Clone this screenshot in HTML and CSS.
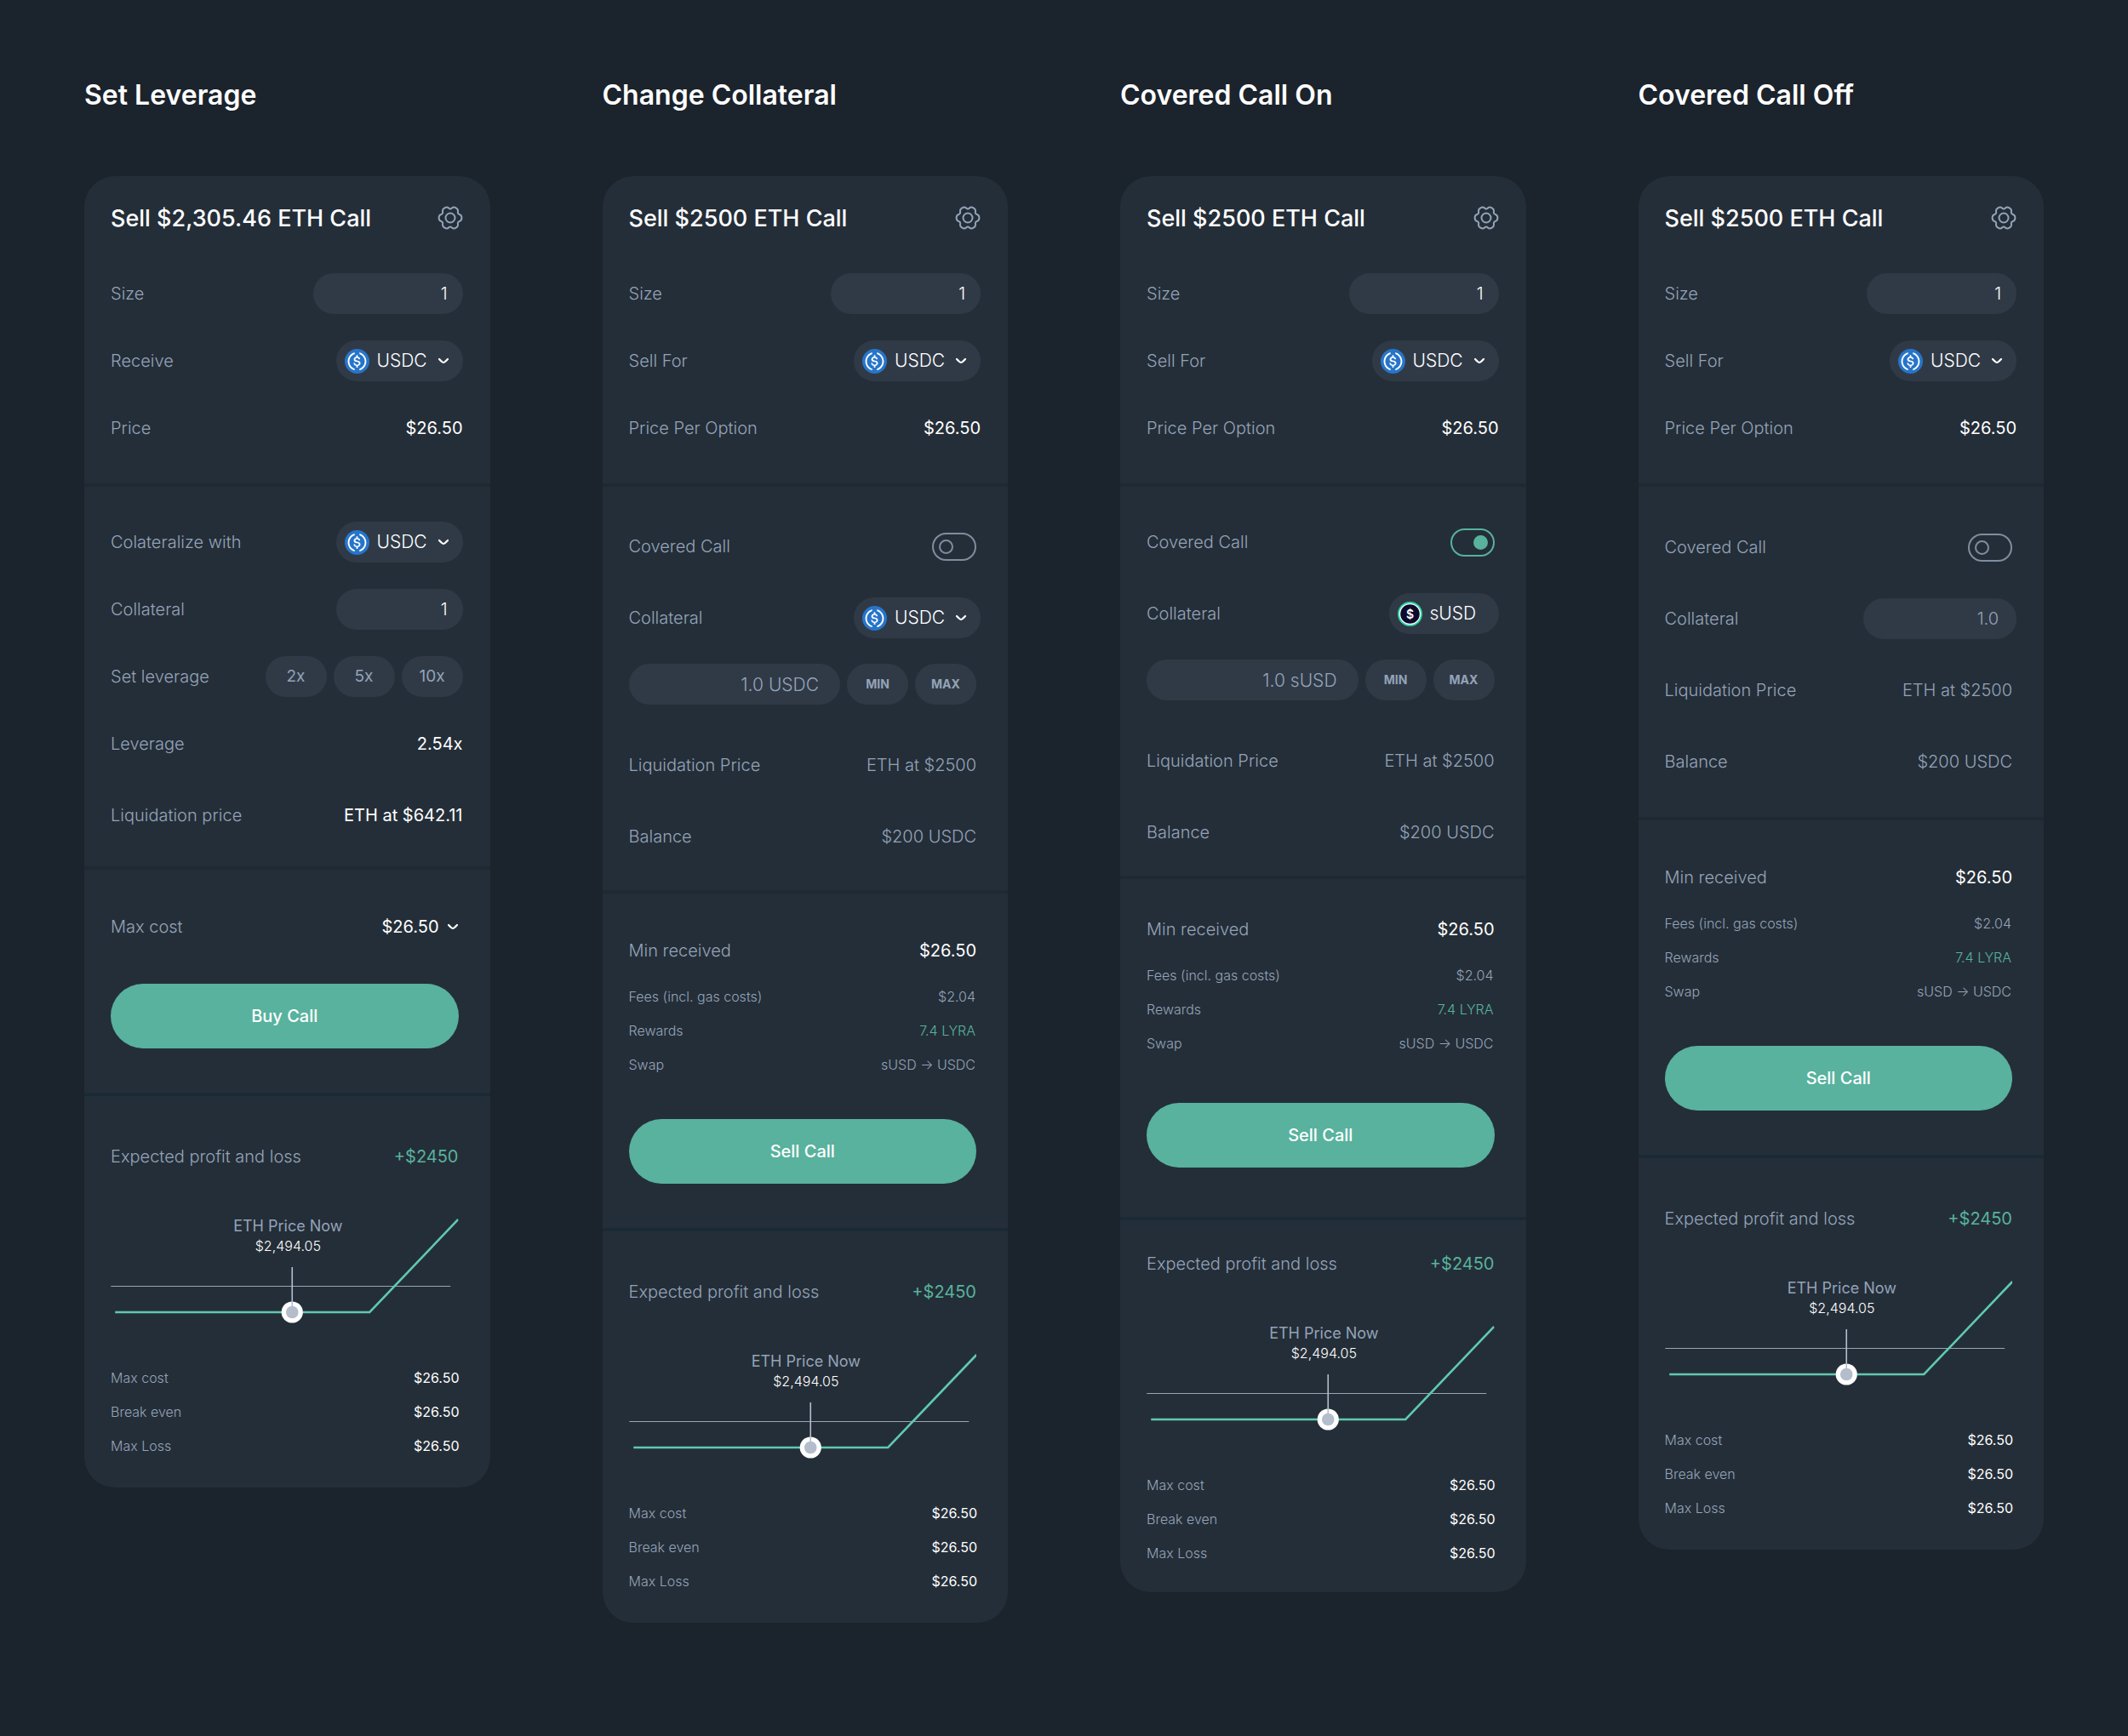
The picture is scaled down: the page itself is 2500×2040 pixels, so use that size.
FILE: index.html
```html
<!DOCTYPE html>
<html lang="en">
<head>
<meta charset="utf-8">
<meta name="viewport" content="width=device-width, initial-scale=1">
<title>Option trade panels</title>
<link rel="stylesheet" href="styles.css">
</head>
<body>
<svg class="sprite" aria-hidden="true">
  <symbol id="gear" viewBox="-15 -15 30 30">
    <path fill="none" stroke="currentColor" stroke-width="2" stroke-linejoin="round" d="M13.39 0Q13.39 3.34 10.85 4.07Q8.31 4.8 8.95 7.37Q9.59 9.93 6.7 11.6Q3.8 13.27 1.9 11.44Q0 9.6 -1.9 11.44Q-3.8 13.27 -6.7 11.6Q-9.59 9.93 -8.95 7.37Q-8.31 4.8 -10.85 4.07Q-13.39 3.34 -13.39 0Q-13.39 -3.34 -10.85 -4.07Q-8.31 -4.8 -8.95 -7.37Q-9.59 -9.93 -6.7 -11.6Q-3.8 -13.27 -1.9 -11.44Q0 -9.6 1.9 -11.44Q3.8 -13.27 6.7 -11.6Q9.59 -9.93 8.95 -7.37Q8.31 -4.8 10.85 -4.07Q13.39 -3.34 13.39 0Z"/>
    <circle r="5.5" fill="none" stroke="currentColor" stroke-width="2"/>
  </symbol>
  <symbol id="usdc" viewBox="0 0 2000 2000">
    <circle cx="1000" cy="1000" r="1000" fill="#2775ca"/>
    <path fill="#fff" d="M1275 1158.33c0-145.83-87.5-195.83-262.5-216.66-125-16.67-150-50-150-108.34s41.67-95.83 125-95.83c75 0 116.67 25 137.5 87.5 4.17 12.5 16.67 20.83 29.17 20.83h66.66c16.67 0 29.17-12.5 29.17-29.16v-4.17c-16.67-91.67-91.67-162.5-187.5-170.83v-100c0-16.67-12.5-29.17-33.33-33.34h-62.5c-16.67 0-29.17 12.5-33.34 33.34v95.83c-125 16.67-204.16 100-204.16 204.17 0 137.5 83.33 191.66 258.33 212.5 116.67 20.83 154.17 45.83 154.17 112.5s-58.34 112.5-137.5 112.5c-108.34 0-145.84-45.84-158.34-108.34-4.16-16.66-16.66-25-29.16-25h-70.84c-16.66 0-29.16 12.5-29.16 29.17v4.17c16.66 104.16 83.33 179.16 220.83 200v100c0 16.66 12.5 29.16 33.33 33.33h62.5c16.67 0 29.17-12.5 33.34-33.33v-100c125-20.84 208.33-108.34 208.33-220.84z"/>
    <path fill="#fff" d="M787.5 1595.83c-325-116.66-491.67-479.16-370.83-800 62.5-175 200-308.33 370.83-370.83 16.67-8.33 25-20.83 25-41.67V325c0-16.67-8.33-29.17-25-33.33-4.17 0-12.5 0-16.67 4.16-395.83 125-612.5 545.84-487.5 941.67 75 233.33 254.17 412.5 487.5 487.5 16.67 8.33 33.34 0 37.5-16.67 4.17-4.16 4.17-8.33 4.17-16.66v-58.34c0-12.5-12.5-29.16-25-37.5zM1229.17 295.83c-16.67-8.33-33.34 0-37.5 16.67-4.17 4.17-4.17 8.33-4.17 16.67v58.33c0 16.67 12.5 33.33 25 41.67 325 116.66 491.67 479.16 370.83 800-62.5 175-200 308.33-370.83 370.83-16.67 8.33-25 20.83-25 41.67V1700c0 16.67 8.33 29.17 25 33.33 4.17 0 12.5 0 16.67-4.16 395.83-125 612.5-545.84 487.5-941.67-75-237.5-258.34-416.67-487.5-491.67z"/>
  </symbol>
  <symbol id="chevron" viewBox="0 0 14 8">
    <path fill="none" stroke="currentColor" stroke-width="2.2" stroke-linecap="round" stroke-linejoin="round" d="M2 2Q5.8 6 7 6T12 2"/>
  </symbol>
  <symbol id="payoff" viewBox="0 0 408 126">
    <path d="M0 80.5H399" stroke="#9aa5b4" stroke-width="1"/>
    <path d="M5 111H304L408 2" fill="none" stroke="#5fc9af" stroke-width="2.6"/>
    <circle cx="213" cy="111" r="12.6" fill="#fff"/>
    <circle cx="213" cy="111" r="7.3" fill="#b4bdcc"/>
    <path d="M213 58V104" stroke="#b4bdcc" stroke-width="1.6"/>
  </symbol>
</svg>

<main class="board">

  <section class="panel">
    <h2 class="panel-name">Set Leverage</h2>
    <article class="card">
      <div class="part part-order">
        <header class="card-head">
          <h3 class="card-title">Sell $2,305.46 ETH Call</h3>
          <button class="icon-button" type="button" aria-label="Settings"><svg class="gear"><use href="#gear"/></svg></button>
        </header>
        <div class="row"><label for="size-1">Size</label><input class="field" id="size-1" type="text" value="1"></div>
        <div class="row"><label for="pay-1">Receive</label>
          <div class="token"><svg class="coin"><use href="#usdc"/></svg><select class="token-select" id="pay-1"><option>USDC</option></select><svg class="chevron"><use href="#chevron"/></svg></div></div>
        <div class="row"><span>Price</span><span class="value">$26.50</span></div>
      </div>
      <div class="part part-leverage">
        <div class="row"><label for="with-1">Colateralize with</label>
          <div class="token"><svg class="coin"><use href="#usdc"/></svg><select class="token-select" id="with-1"><option>USDC</option></select><svg class="chevron"><use href="#chevron"/></svg></div></div>
        <div class="row"><label for="col-1">Collateral</label><input class="field field-short" id="col-1" type="text" value="1"></div>
        <div class="row"><span>Set leverage</span>
          <div class="chips"><button class="chip" type="button">2x</button><button class="chip" type="button">5x</button><button class="chip" type="button">10x</button></div></div>
        <div class="row"><span>Leverage</span><span class="value">2.54x</span></div>
        <div class="row loose"><span>Liquidation price</span><span class="value">ETH at $642.11</span></div>
      </div>
      <div class="part part-total">
        <div class="row inset"><span>Max cost</span><button class="cost value" type="button">$26.50<svg class="chevron"><use href="#chevron"/></svg></button></div>
        <button class="submit submit-near" type="button">Buy Call</button>
      </div>
      <div class="part part-profit">
        <div class="row inset"><span>Expected profit and loss</span><span class="gain">+$2450</span></div>
        <div class="chart"><svg class="payoff"><use href="#payoff"/></svg><p class="marker"><span class="marker-name">ETH Price Now</span><span class="marker-price">$2,494.05</span></p></div>
        <dl class="facts">
          <div><dt>Max cost</dt><dd>$26.50</dd></div>
          <div><dt>Break even</dt><dd>$26.50</dd></div>
          <div><dt>Max Loss</dt><dd>$26.50</dd></div>
        </dl>
      </div>
    </article>
  </section>

  <section class="panel">
    <h2 class="panel-name">Change Collateral</h2>
    <article class="card">
      <div class="part part-order">
        <header class="card-head">
          <h3 class="card-title">Sell $2500 ETH Call</h3>
          <button class="icon-button" type="button" aria-label="Settings"><svg class="gear"><use href="#gear"/></svg></button>
        </header>
        <div class="row"><label for="size-2">Size</label><input class="field" id="size-2" type="text" value="1"></div>
        <div class="row"><label for="pay-2">Sell For</label>
          <div class="token"><svg class="coin"><use href="#usdc"/></svg><select class="token-select" id="pay-2"><option>USDC</option></select><svg class="chevron"><use href="#chevron"/></svg></div></div>
        <div class="row"><span>Price Per Option</span><span class="value">$26.50</span></div>
      </div>
      <div class="part part-collateral">
        <div class="row inset"><label for="cover-2">Covered Call</label><input class="toggle" id="cover-2" type="checkbox"></div>
        <div class="row loose"><label for="with-2">Collateral</label>
          <div class="token"><svg class="coin"><use href="#usdc"/></svg><select class="token-select" id="with-2"><option>USDC</option></select><svg class="chevron"><use href="#chevron"/></svg></div></div>
        <div class="row tight inset amount"><input class="field field-amount" type="text" value="1.0 USDC" aria-label="Collateral amount"><button class="chip chip-limit" type="button">MIN</button><button class="chip chip-limit" type="button">MAX</button></div>
        <div class="row far inset"><span>Liquidation Price</span><span>ETH at $2500</span></div>
        <div class="row loose inset"><span>Balance</span><span>$200 USDC</span></div>
      </div>
      <div class="part part-total">
        <div class="row inset"><span>Min received</span><span class="value">$26.50</span></div>
        <dl class="facts fees">
          <div><dt>Fees (incl. gas costs)</dt><dd>$2.04</dd></div>
          <div><dt>Rewards</dt><dd class="gain">7.4 LYRA</dd></div>
          <div><dt>Swap</dt><dd>sUSD → USDC</dd></div>
        </dl>
        <button class="submit" type="button">Sell Call</button>
      </div>
      <div class="part part-profit">
        <div class="row inset"><span>Expected profit and loss</span><span class="gain">+$2450</span></div>
        <div class="chart"><svg class="payoff"><use href="#payoff"/></svg><p class="marker"><span class="marker-name">ETH Price Now</span><span class="marker-price">$2,494.05</span></p></div>
        <dl class="facts">
          <div><dt>Max cost</dt><dd>$26.50</dd></div>
          <div><dt>Break even</dt><dd>$26.50</dd></div>
          <div><dt>Max Loss</dt><dd>$26.50</dd></div>
        </dl>
      </div>
    </article>
  </section>

  <section class="panel">
    <h2 class="panel-name">Covered Call On</h2>
    <article class="card card-covered">
      <div class="part part-order">
        <header class="card-head">
          <h3 class="card-title">Sell $2500 ETH Call</h3>
          <button class="icon-button" type="button" aria-label="Settings"><svg class="gear"><use href="#gear"/></svg></button>
        </header>
        <div class="row"><label for="size-3">Size</label><input class="field" id="size-3" type="text" value="1"></div>
        <div class="row"><label for="pay-3">Sell For</label>
          <div class="token"><svg class="coin"><use href="#usdc"/></svg><select class="token-select" id="pay-3"><option>USDC</option></select><svg class="chevron"><use href="#chevron"/></svg></div></div>
        <div class="row"><span>Price Per Option</span><span class="value">$26.50</span></div>
      </div>
      <div class="part part-collateral">
        <div class="row inset"><label for="cover-3">Covered Call</label><input class="toggle" id="cover-3" type="checkbox" checked></div>
        <div class="row loose"><span>Collateral</span>
          <div class="token token-fixed"><svg class="coin" viewBox="0 0 29 29"><circle cx="14.5" cy="14.5" r="14.5" fill="#2fd3a3"/><circle cx="14.5" cy="14.5" r="12.6" fill="#fff"/><circle cx="14.5" cy="14.5" r="11.3" fill="#0e0a2e"/><text class="coin-sign" x="14.5" y="19.5" text-anchor="middle">$</text></svg><span>sUSD</span></div></div>
        <div class="row tight inset amount"><input class="field field-amount" type="text" value="1.0 sUSD" aria-label="Collateral amount"><button class="chip chip-limit" type="button">MIN</button><button class="chip chip-limit" type="button">MAX</button></div>
        <div class="row far inset"><span>Liquidation Price</span><span>ETH at $2500</span></div>
        <div class="row loose inset"><span>Balance</span><span>$200 USDC</span></div>
      </div>
      <div class="part part-total">
        <div class="row inset"><span>Min received</span><span class="value">$26.50</span></div>
        <dl class="facts fees">
          <div><dt>Fees (incl. gas costs)</dt><dd>$2.04</dd></div>
          <div><dt>Rewards</dt><dd class="gain">7.4 LYRA</dd></div>
          <div><dt>Swap</dt><dd>sUSD → USDC</dd></div>
        </dl>
        <button class="submit" type="button">Sell Call</button>
      </div>
      <div class="part part-profit">
        <div class="row inset"><span>Expected profit and loss</span><span class="gain">+$2450</span></div>
        <div class="chart"><svg class="payoff"><use href="#payoff"/></svg><p class="marker"><span class="marker-name">ETH Price Now</span><span class="marker-price">$2,494.05</span></p></div>
        <dl class="facts">
          <div><dt>Max cost</dt><dd>$26.50</dd></div>
          <div><dt>Break even</dt><dd>$26.50</dd></div>
          <div><dt>Max Loss</dt><dd>$26.50</dd></div>
        </dl>
      </div>
    </article>
  </section>

  <section class="panel">
    <h2 class="panel-name">Covered Call Off</h2>
    <article class="card card-uncovered">
      <div class="part part-order">
        <header class="card-head">
          <h3 class="card-title">Sell $2500 ETH Call</h3>
          <button class="icon-button" type="button" aria-label="Settings"><svg class="gear"><use href="#gear"/></svg></button>
        </header>
        <div class="row"><label for="size-4">Size</label><input class="field" id="size-4" type="text" value="1"></div>
        <div class="row"><label for="pay-4">Sell For</label>
          <div class="token"><svg class="coin"><use href="#usdc"/></svg><select class="token-select" id="pay-4"><option>USDC</option></select><svg class="chevron"><use href="#chevron"/></svg></div></div>
        <div class="row"><span>Price Per Option</span><span class="value">$26.50</span></div>
      </div>
      <div class="part part-collateral">
        <div class="row inset"><label for="cover-4">Covered Call</label><input class="toggle" id="cover-4" type="checkbox"></div>
        <div class="row loose"><label for="col-4">Collateral</label><input class="field field-muted" id="col-4" type="text" value="1.0"></div>
        <div class="row loose inset"><span>Liquidation Price</span><span>ETH at $2500</span></div>
        <div class="row loose inset"><span>Balance</span><span>$200 USDC</span></div>
      </div>
      <div class="part part-total">
        <div class="row inset"><span>Min received</span><span class="value">$26.50</span></div>
        <dl class="facts fees">
          <div><dt>Fees (incl. gas costs)</dt><dd>$2.04</dd></div>
          <div><dt>Rewards</dt><dd class="gain">7.4 LYRA</dd></div>
          <div><dt>Swap</dt><dd>sUSD → USDC</dd></div>
        </dl>
        <button class="submit" type="button">Sell Call</button>
      </div>
      <div class="part part-profit">
        <div class="row inset"><span>Expected profit and loss</span><span class="gain">+$2450</span></div>
        <div class="chart"><svg class="payoff"><use href="#payoff"/></svg><p class="marker"><span class="marker-name">ETH Price Now</span><span class="marker-price">$2,494.05</span></p></div>
        <dl class="facts">
          <div><dt>Max cost</dt><dd>$26.50</dd></div>
          <div><dt>Break even</dt><dd>$26.50</dd></div>
          <div><dt>Max Loss</dt><dd>$26.50</dd></div>
        </dl>
      </div>
    </article>
  </section>

</main>
</body>
</html>
```
FILE: styles.css
```css
:root {
  --page: #1b232c;
  --card: #242e38;
  --control: #303a47;
  --muted: #94a3b8;
  --text: #ffffff;
  --green: #58b29d;
  --rule: #1f2932;
  --rule-deep: #1a2a34;
}

*, *::before { box-sizing: border-box; }

body {
  margin: 0;
  min-height: 100vh;
  background: var(--page);
  color: var(--muted);
  font: 300 20px/24px Inter, "Liberation Sans", sans-serif;
}

h2, h3, p, dl, dd { margin: 0; }

button, input, select {
  margin: 0;
  border: 0;
  padding: 0;
  background: none;
  color: inherit;
  font: inherit;
}

button { cursor: pointer; }

.sprite {
  position: absolute;
  width: 0;
  height: 0;
}

.board {
  display: grid;
  grid-template-columns: repeat(4, 1fr);
  align-items: start;
  gap: 132px;
  padding: 92px 99px;
}

.panel-name {
  margin-bottom: 75px;
  color: var(--text);
  font-size: 32px;
  font-weight: 600;
  line-height: 40px;
}

.card {
  border-radius: 36px;
  background: var(--card);
}

/* Each card is a stack of parts divided by a thick rule. */
.part { padding: 0 32px 0 31px; }
.part + .part { border-top: 4px solid var(--rule); }
.part + .part-profit { border-top-color: var(--rule-deep); }

.part-order { padding-top: 34px; padding-bottom: 41px; }
.part-leverage { padding-top: 41px; padding-bottom: 36px; }
.part-collateral { padding-top: 46px; padding-bottom: 39px; }
.part-total { padding-top: 43px; padding-bottom: 52px; }
.part-profit { padding-top: 47px; padding-bottom: 37px; }

.card-covered .part-collateral { padding-top: 41px; padding-bottom: 27px; }
.card-covered .part-total { padding-top: 35px; padding-bottom: 58px; }
.card-covered .part-profit { padding-top: 27px; padding-bottom: 34px; }
.card-covered .submit { margin-top: 58px; }

.card-uncovered .part-collateral { padding-top: 47px; padding-bottom: 41px; }

.card-head {
  display: flex;
  align-items: flex-start;
  justify-content: space-between;
  height: 32px;
  margin-bottom: 48px;
}

.card-title {
  color: var(--text);
  font-size: 27px;
  font-weight: 500;
  line-height: 32px;
}

.icon-button { display: flex; }

.gear { width: 30px; height: 30px; }

.row {
  display: flex;
  align-items: center;
  justify-content: space-between;
  min-height: 48px;
}

.row + .row { margin-top: 31px; }
.row + .tight { margin-top: 30px; }
.row + .loose { margin-top: 36px; }
.row + .far { margin-top: 47px; }

.inset { padding-right: 5px; }

.value { color: var(--text); font-weight: 400; }
.gain { color: var(--green); font-weight: 400; }

.field {
  width: 176px;
  height: 48px;
  padding: 0 18px;
  border-radius: 24px;
  background: var(--control);
  color: var(--text);
  text-align: right;
}

.field-short { width: 149px; }
.field-muted { width: 180px; padding: 0 21px; color: var(--muted); }

.field-amount {
  flex: 1;
  min-width: 0;
  padding: 0 25px;
  color: var(--muted);
  font-size: 21px;
}

.token {
  display: flex;
  align-items: center;
  gap: 9px;
  width: 149px;
  height: 48px;
  padding: 0 16px 0 10px;
  border-radius: 24px;
  background: var(--control);
  color: var(--text);
  font-size: 21px;
}

.token-select {
  flex: 1;
  min-width: 0;
  height: 48px;
  appearance: none;
  cursor: pointer;
}

.token-fixed { width: 129px; }

.coin { width: 29px; height: 29px; }
.coin-sign { fill: #fff; font-size: 14px; font-weight: 600; }
.chevron { width: 14px; height: 8px; }

.chips, .amount { display: flex; gap: 8px; }

.chip {
  width: 72px;
  height: 48px;
  border-radius: 24px;
  background: var(--control);
  font-size: 19px;
  font-weight: 400;
}

.chip-limit { font-size: 14px; font-weight: 700; }

.toggle {
  appearance: none;
  display: flex;
  width: 52px;
  height: 33px;
  padding: 6px;
  border: 2px solid #7f8d9f;
  border-radius: 17px;
  cursor: pointer;
}

.toggle::before {
  content: "";
  width: 17px;
  height: 17px;
  border: 2px solid #7f8d9f;
  border-radius: 50%;
}

.toggle:checked { justify-content: flex-end; border-color: var(--green); }
.toggle:checked::before { border-color: var(--green); background: var(--green); }

.cost {
  display: flex;
  align-items: center;
  gap: 9px;
}

.submit {
  display: block;
  width: calc(100% - 5px);
  height: 76px;
  margin-top: 52px;
  border-radius: 38px;
  background: var(--green);
  color: var(--text);
  font-size: 20px;
  font-weight: 500;
}

.submit-near { margin-top: 43px; }

.facts {
  display: grid;
  gap: 16px;
  padding-right: 4px;
  font-size: 16px;
}

.facts div { display: flex; justify-content: space-between; }
.facts dd { color: var(--text); font-weight: 400; }
.fees { margin-top: 18px; padding-right: 6px; }
.fees dd { color: var(--muted); font-weight: 300; }
.fees .gain { color: var(--green); }

.chart {
  position: relative;
  margin: 48px 5px 50px 0;
}

.payoff {
  display: block;
  width: 100%;
  height: 126px;
}

/* Price label sits over the chart, above its pointer. */
.marker {
  position: absolute;
  top: -2px;
  left: 51%;
  display: grid;
  justify-items: center;
  transform: translateX(-50%);
}

.marker-name { font-size: 18px; font-weight: 400; }
.marker-price { color: var(--text); font-size: 16px; line-height: 22px; }
```
